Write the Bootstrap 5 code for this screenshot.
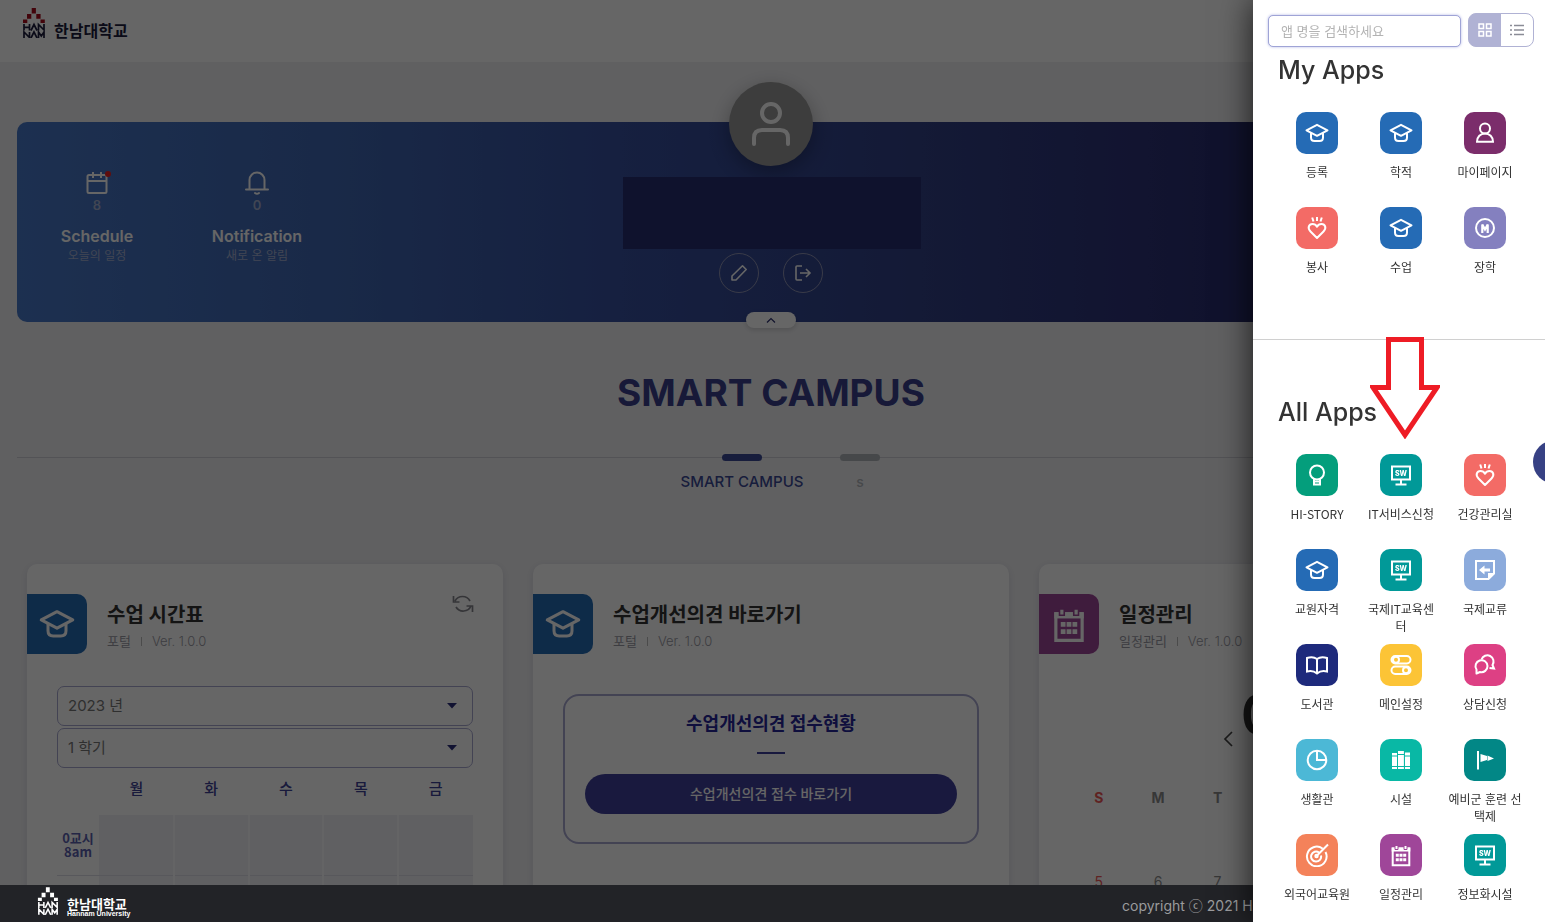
<!DOCTYPE html>
<html lang="ko">
<head>
<meta charset="utf-8">
<meta name="viewport" content="width=device-width, initial-scale=1">
<title>한남대학교 SMART CAMPUS</title>
<link href="https://cdn.jsdelivr.net/npm/bootstrap@5.3.0/dist/css/bootstrap.min.css" rel="stylesheet">
<style>
:root { --navy: #3a3f8c; --line: #a8a8d0; }
body { font-family: Inter, "Noto Sans CJK KR", sans-serif; background: #f0f0f3; overflow: hidden; }
svg { fill: none; stroke: currentColor; stroke-width: 2; display: block; flex: none; }
.kr { font-family: "Noto Sans CJK KR", sans-serif; }
.page { height: 100vh; overflow: hidden; padding-right: 3px; }
.topbar { height: 62px; background: #fff; padding: 8px 22px; margin-right: -3px; }
.brand-name { font-size: 16px; line-height: 20px; color: #1c1c3c; font-weight: 700; margin-top: 12px; }
.hero { margin: 60px 17px 0; height: 200px; border-radius: 10px; background: linear-gradient(90deg, #4878c8 0%, #3f66b2 22%, #3750a0 40%, #324187 60%, #2d3278 75%, #282d6e 82%, #24285f 100%); }
.stat { width: 160px; margin-top: 48px; }
.stat-icon { width: 26px; height: 26px; margin: 0 auto; }
.stat-count { font-size: 13px; line-height: 18px; font-weight: 600; color: #a3afd0; }
.stat-name { font-size: 16px; line-height: 20px; font-weight: 600; margin-top: 12px; }
.stat-note { font-size: 12px; line-height: 20px; color: #a3afd0; }
.stat-dot { width: 6px; height: 6px; background: #e22; top: 1px; right: -1px; }
.profile { top: -40px; }
.avatar { width: 84px; height: 84px; background: #989898; box-shadow: 0 6px 20px rgba(0,0,0,.3); }
.name-box { width: 298px; height: 72px; background: #272f70; margin: 11px 0 4px 2px; }
.round-btn { width: 40px; height: 40px; border: 1px solid #8f93b4; background: transparent; color: #fff; }
.fold-btn { width: 50px; height: 16px; border-radius: 8px; background: #fff; color: #2a2f70; bottom: -6px; box-shadow: 0 2px 5px rgba(0,0,0,.15); }
.page-title { font-size: 37px; line-height: 44px; margin: 49px 0 39px; color: var(--navy); font-weight: 700; }
.tabs-line { margin: 0 17px; }
.tabs-line::before { content: ""; position: absolute; left: 0; right: 0; top: 3px; height: 1px; background: #cfcfd6; }
.tab-item { width: 178px; padding: 0; font-size: 15px; line-height: 20px; font-weight: 500; color: #3b4a96; background: none; border: 0; z-index: 1; }
.tab-item::before { content: ""; display: block; width: 40px; height: 7px; border-radius: 4px; background: currentColor; margin: 0 auto 11px; }
.tab-item.off { width: 58px; color: #b0b5ba; font-size: 14px; }
.board { padding: 0 27px; margin-top: 72px; }
.board .row { --bs-gutter-x: 30px; }
.widget { border: 0; border-radius: 10px; box-shadow: 0 2px 8px rgba(0,0,60,.1); height: 600px; padding-top: 30px; }
.widget-icon { width: 60px; height: 60px; border-radius: 0 10px 10px 0; color: #fff; }
.blue { background: #256bb5; } .plum { background: #7b2d6b; } .coral { background: #f36b66; } .lilac { background: #8480bf; }
.green { background: #049e7c; } .teal { background: #019998; } .sky { background: #8cabdc; } .navy { background: #1e2a7c; }
.yellow { background: #fcc436; } .pink { background: #dd4084; } .aqua { background: #4cb8d6; } .mint { background: #09b8a5; }
.deep { background: #028786; } .orange { background: #f4825a; } .violet { background: #9f4699; }
.widget-title { font-size: 20px; line-height: 28px; font-weight: 700; color: #333; margin: 7px 0 0; }
.widget-sub { font-size: 13px; line-height: 24px; color: #9999a3; gap: 10px; }
.widget-sub span:last-child { font-weight: 300; }
.widget-sub i { width: 1px; height: 9px; background: #bbb; }
.widget-body { padding: 0 30px; margin-top: 32px; }
.pick { height: 40px; border: 1px solid var(--line); border-radius: 7px; padding: 0 10px; font-size: 15px; color: #777; margin-bottom: 2px;
  background-image: url("data:image/svg+xml,%3csvg xmlns='http://www.w3.org/2000/svg' viewBox='0 0 10 6'%3e%3cpath fill='%232c2f7c' d='M0 0h10L5 5.5z'/%3e%3c/svg%3e"); background-size: 10px 6px; background-position: right 15px center; }
.timetable { table-layout: fixed; font-size: 13px; margin: 0; width: 100%; border-collapse: collapse; }
.timetable th { color: #3d4196; font-weight: 500; text-align: center; padding: 0; }
.timetable thead th { height: 45px; font-size: 15px; padding-bottom: 8px; }
.timetable tbody th { color: #5b5fae; font-weight: 700; line-height: 14px; }
.timetable .hours { width: 42px; }
.timetable tbody tr { height: 60px; border-bottom: 1px solid #dcdce6; }
.timetable td { background: #f0f1f5; border-right: 2px solid #fafafc; }
.timetable td:last-child { border-right: 0; }
.notice { border: 2px solid var(--line); border-radius: 16px; height: 150px; margin-top: 8px; padding: 12px 20px; }
.notice-body { display: flow-root; }
.notice h3 { font-size: 18px; line-height: 32px; font-weight: 700; color: #26269a; margin: 0; }
.notice hr { width: 28px; border: 0; height: 2px; background: #3d3f9c; opacity: 1; margin: 12px auto 20px; }
.notice-btn { height: 40px; background: #40409c; color: #fff; font-size: 14px; font-weight: 500; line-height: 24px; border: 0; }
.month { font-size: 56px; line-height: 58px; font-weight: 600; color: #333; }
.month-nav { color: #444; margin-bottom: 20px; }
.cal-days { grid-template-columns: repeat(7, 1fr); display: grid; text-align: center; font-size: 14px; line-height: 20px; color: #8a8a8a; }
.cal-days .sun { color: #e55; }
.footer-bar { height: 37px; background: #222327; z-index: 1041; padding: 2px 22px 0 37px; color: #fff; }
.footer-name { font-size: 13px; line-height: 13px; font-weight: 700; margin-top: 10px; }
.footer-name small { font-family: "Liberation Sans", sans-serif; font-size: 7px; line-height: 7px; display: block; }
.copy { font-size: 14px; color: #9b9b9d; width: 401px; line-height: 37px; }
.offcanvas-backdrop.show { opacity: .6; }
.drawer.offcanvas { width: 292px; border: 0; box-shadow: 0 0 32px rgba(0,0,0,.75); visibility: visible; overflow: hidden; transition: none; }
.drawer-head { padding: 13px 11px 0 15px; gap: 7px; }
.search, .search:focus { height: 32px; font-size: 13px; border: 1px solid #9fa4d6; border-radius: 5px; padding: 0 12px 2px; box-shadow: 0 0 3px #b5b9e6; margin-top: 2px; }
.search::placeholder { color: #b3b3b3; }
.view-btn { width: 34px; height: 34px; border: 1px solid #b0b2d4; color: #8a8c96; border-radius: 8px; padding: 0; }
.view-btn.on { background: #b0b2d4; color: #fff; width: 33px; }
.apps { padding: 8px 18px 0 22px; flex-shrink: 0; }
.apps + .apps { border-top: 1px solid #d0d0d0; padding-top: 57px; }
.apps h2 { font-size: 25px; line-height: 30px; font-weight: 500; color: #333; margin: 0 0 27px 3px; }
.apps-mine { height: 292px; }
.app-grid { display: grid; grid-template-columns: repeat(3, 1fr); grid-auto-rows: 95px; }
.app-item { font: 12px/17px "Noto Sans CJK KR", sans-serif; color: #333; text-decoration: none; }
.app-item span { width: 74px; word-break: break-all; text-align: center; }
.app-icon { width: 42px; height: 42px; border-radius: 10px; color: #fff; margin-bottom: 9px; }
.pointer { left: 117px; top: 337px; z-index: 2; }
.side-dot { width: 44px; height: 44px; background: #374184; right: -32px; top: 440px; z-index: 1060; border: 0; }
</style>
</head>
<body>
<svg width="0" height="0" class="position-absolute" aria-hidden="true">
  <symbol id="i-cap" viewBox="0 0 24 24"><path d="M12 3.800 22.500 9.300 12 14.800 1.500 9.300z" stroke-linejoin="round"/><path d="M6 12v4.500Q6 20 9.500 20h5Q18 20 18 16.500V12"/></symbol>
  <symbol id="i-me" viewBox="0 0 24 24"><circle cx="12" cy="7.500" r="5"/><path d="M4 20.800h16c0-5-3.500-8.300-8-8.300s-8 3.300-8 8.300z"/></symbol>
  <symbol id="i-heart" viewBox="0 0 24 24"><path d="M12 22 5.500 15.500C2 12 4 8 7.500 8q3 0 4.500 2.700Q13.500 8 16.500 8c3.500 0 5.500 4 2 7.500z" stroke-linejoin="round"/><path d="M7.200 1.500 8.500 5.500M12 1v4M16.800 1.500l-1.300 4"/></symbol>
  <symbol id="i-coin" viewBox="0 0 24 24"><circle cx="12" cy="12" r="9"/><path d="M9.300 17V8.500l2.700 5 2.700-5V17" stroke-width="2.200"/></symbol>
  <symbol id="i-bulb" viewBox="0 0 24 24"><circle cx="12" cy="9.500" r="7"/><path d="M9 15.500v6h6v-6M9 18.500h6"/></symbol>
  <symbol id="i-note" viewBox="0 0 24 24"><path d="M3 3h18v12.500L15.500 21H3z"/><path d="M21 15h-6v6zM6 12l5.500-4.500v3H17v3h-5.500v3z" fill="currentColor" stroke="none"/></symbol>
  <symbol id="i-book" viewBox="0 0 24 24"><path d="M2 5q6-2 10 1 4-3 10-1v13.500q-6-1.500-10 2-4-3.500-10-2zM12 6v14"/></symbol>
  <symbol id="i-toggle" viewBox="0 0 24 24"><rect x="2.500" y="3" width="19" height="7.500" rx="3.700"/><rect x="2.500" y="13.500" width="19" height="7.500" rx="3.700"/><circle cx="7" cy="6.700" r="3"/><circle cx="17" cy="17.300" r="3"/></symbol>
  <symbol id="i-talk" viewBox="0 0 24 24"><path d="M8.500 6.500A6.200 6.200 0 1 1 19.500 12l1.500 3.500-4.500-.5"/><path d="M3.500 20.500v-4a6 6 0 1 1 3.500 2.500z" stroke-linejoin="round"/></symbol>
  <symbol id="i-pie" viewBox="0 0 24 24"><circle cx="12" cy="12" r="9.300"/><path d="M12 3v9h9"/></symbol>
  <symbol id="i-shelf" viewBox="0 0 24 24"><path d="M3 5h5v16H3zM9 3h6v18H9zM15.800 4.500H21V21h-5.200z" fill="currentColor" stroke="none"/><path d="M3 8h5M9 6.500h6M16 8h5M3 18.500h18M8.500 3v18M15.400 3v18" stroke="#09b8a5" stroke-width="1"/></symbol>
  <symbol id="i-flag" viewBox="0 0 24 24"><path d="M5 3v18.500"/><path d="M7.500 6l6.500 2v4l-6.500 2zM14.500 7.500 21 10.500l-6.500 2.500z" fill="currentColor" stroke="none"/></symbol>
  <symbol id="i-target" viewBox="0 0 24 24"><path d="M17.500 5.500A9.800 9.800 0 1 0 20.500 9M14 9.500a5 5 0 1 0 2 3M11.500 13 23 1.500"/><circle cx="11.500" cy="13" r="1.200"/></symbol>
  <symbol id="i-cal" viewBox="0 0 24 24"><path d="M3.700 5.500h16.600v16.800H3.700z"/><path d="M2.700 4.500h18.600v4H2.700z" fill="currentColor" stroke="none"/><path d="M6 2.500h3v4H6zM15 2.500h3v4h-3z" fill="currentColor" stroke="#9f4699" stroke-width="1"/><path d="M6.800 10.800h3v3h-3zM10.500 10.800h3v3h-3zM14.200 10.800h3v3h-3zM6.800 15.300h3v3h-3zM10.500 15.300h3v3h-3zM14.200 15.300h3v3h-3z" fill="currentColor" stroke="none"/></symbol>
  <symbol id="i-emblem" viewBox="0 0 24 30"><path d="M9.700 0h4.200v5.500H9.700zM5 6h4.300v4.800H5zM14.300 6h4.300v4.800h-4.300zM1 11.500h4.300V15H1zM18.500 11.500h4.300V15h-4.300z" fill="var(--blocks)" stroke="none"/><path d="M2 16v6.500M7.500 16v6.500M2 19.300h5.500M9 22.500l3-6 3 6M16.500 22.500v-6l5.500 5.500v-6M2 30v-6l5.500 5.500V24M9 30l3-6 3 6M16.500 30v-6l2.800 4 2.700-4v6" stroke-width="1.700"/></symbol>
</svg>

<div class="page">
  <header class="topbar d-flex align-items-start gap-2">
    <svg width="24" height="30" style="--blocks:#a80c1c" color="#1c1c3c"><use href="#i-emblem"/></svg>
    <span class="brand-name kr">한남대학교</span>
  </header>

  <section class="hero position-relative d-flex text-white text-center">
    <div class="stat">
      <div class="stat-icon position-relative">
        <svg width="26" height="26" viewBox="0 0 26 26"><rect x="3.500" y="5" width="19" height="18" rx="1.500"/><path d="M3 11h20M9 2v6M17 2v6"/></svg>
        <span class="stat-dot rounded-circle position-absolute"></span>
      </div>
      <div class="stat-count">8</div><div class="stat-name">Schedule</div><div class="stat-note">오늘의 일정</div>
    </div>
    <div class="stat">
      <div class="stat-icon"><svg width="26" height="26" viewBox="0 0 26 26"><path d="M2 19.500h22M5.500 19.500V10a7.500 7.500 0 0 1 15 0v9.500M11 23q2 1.500 4 0" stroke-linecap="round"/></svg></div>
      <div class="stat-count">0</div><div class="stat-name">Notification</div><div class="stat-note">새로 온 알림</div>
    </div>
    <div class="profile position-absolute start-50 translate-middle-x d-flex flex-column align-items-center">
      <div class="avatar rounded-circle d-flex align-items-center justify-content-center">
        <svg width="40" height="46" viewBox="0 0 40 46" stroke-linecap="round"><g stroke-width="4"><circle cx="20" cy="12" r="9"/><path d="M3 43v-6q0-8 8-8h18q8 0 8 8v6"/></g></svg>
      </div>
      <div class="name-box"></div>
      <div class="d-flex gap-4">
        <button class="round-btn rounded-circle p-0 d-flex align-items-center justify-content-center" aria-label="프로필 수정"><svg width="18" height="18" viewBox="0 0 18 18"><path d="M2 16v-4L12.500 1.800l3.700 3.700L6 16z" stroke-linejoin="round" stroke-width="1.600"/></svg></button>
        <button class="round-btn rounded-circle p-0 d-flex align-items-center justify-content-center" aria-label="로그아웃"><svg width="18" height="18" viewBox="0 0 18 18"><path d="M8 2H3Q2 2 2 3v12q0 1 1 1h5M6 9h10M12 5l4 4-4 4" stroke-width="1.600"/></svg></button>
      </div>
    </div>
    <button class="fold-btn border-0 p-0 position-absolute start-50 translate-middle-x d-flex align-items-center justify-content-center" aria-label="접기"><svg width="10" height="6" viewBox="0 0 10 6"><path d="M1 5.500 5 1.500l4 4" stroke-width="1.200"/></svg></button>
  </section>

  <h1 class="page-title text-center">SMART CAMPUS</h1>
  <nav class="tabs-line position-relative d-flex justify-content-center">
    <button class="tab-item">SMART CAMPUS</button>
    <button class="tab-item off">s</button>
  </nav>

  <main class="board"><div class="row row-cols-3">
    <div class="col"><article class="card widget">
      <div class="d-flex">
        <div class="widget-icon blue d-flex align-items-center justify-content-center"><svg width="36" height="36"><use href="#i-cap"/></svg></div>
        <div class="ms-3 ps-1 flex-grow-1"><h2 class="widget-title">수업 시간표</h2><div class="widget-sub d-flex align-items-center"><span>포털</span><i></i><span>Ver. 1.0.0</span></div></div>
        <svg class="me-4" color="#85858c" width="32" height="20" viewBox="0 0 32 20"><path d="M8 7a8.500 8.500 0 0 1 15 0M24 12a8.500 8.500 0 0 1-15 1M6.500 2v6h6M25.500 18v-6h-6" stroke-width="1.700"/></svg>
      </div>
      <div class="widget-body">
        <select class="form-select pick" aria-label="년도"><option>2023 년</option></select>
        <select class="form-select pick" aria-label="학기"><option>1 학기</option></select>
        <table class="timetable kr">
          <colgroup><col class="hours"><col><col><col><col><col></colgroup>
          <thead><tr><th></th><th>월</th><th>화</th><th>수</th><th>목</th><th>금</th></tr></thead>
          <tbody><tr><th>0교시<br>8am</th><td></td><td></td><td></td><td></td><td></td></tr>
          <tr><th></th><td></td><td></td><td></td><td></td><td></td></tr></tbody>
        </table>
      </div>
    </article></div>
    <div class="col"><article class="card widget">
      <div class="d-flex">
        <div class="widget-icon blue d-flex align-items-center justify-content-center"><svg width="36" height="36"><use href="#i-cap"/></svg></div>
        <div class="ms-3 ps-1"><h2 class="widget-title">수업개선의견 바로가기</h2><div class="widget-sub d-flex align-items-center"><span>포털</span><i></i><span>Ver. 1.0.0</span></div></div>
      </div>
      <div class="widget-body notice-body"><div class="notice text-center">
        <h3>수업개선의견 접수현황</h3><hr>
        <button class="btn notice-btn rounded-pill w-100">수업개선의견 접수 바로가기</button>
      </div></div>
    </article></div>
    <div class="col"><article class="card widget">
      <div class="d-flex">
        <div class="widget-icon violet d-flex align-items-center justify-content-center"><svg width="38" height="38"><use href="#i-cal"/></svg></div>
        <div class="ms-3 ps-1"><h2 class="widget-title">일정관리</h2><div class="widget-sub d-flex align-items-center"><span>일정관리</span><i></i><span>Ver. 1.0.0</span></div></div>
      </div>
      <div class="widget-body">
        <div class="month-nav d-flex justify-content-center align-items-center text-center">
          <svg class="mt-4" width="10" height="16" viewBox="0 0 10 16"><path d="M9 1 2 8l7 7" stroke-width="1.700"/></svg>
          <div class="mx-2"><div class="month">03</div><div>2023</div></div>
          <svg class="mt-4" width="10" height="16" viewBox="0 0 10 16"><path d="m1 1 7 7-7 7" stroke-width="1.700"/></svg>
        </div>
        <div class="cal-days fw-bold mb-5 pb-3"><span class="sun">S</span><span>M</span><span>T</span></div>
        <div class="cal-days"><span class="sun">5</span><span>6</span><span>7</span></div>
      </div>
    </article></div>
  </div></main>
</div>

<div class="offcanvas-backdrop show"></div>

<footer class="footer-bar fixed-bottom d-flex justify-content-between">
  <div class="d-flex gap-1">
    <svg width="22" height="28" style="--blocks:#fff"><use href="#i-emblem"/></svg>
    <div class="footer-name kr ms-1">한남대학교<small>Hannam University</small></div>
  </div>
  <div class="copy text-nowrap">copyright ⓒ 2021 HANNAM UNIVERSITY</div>
</footer>

<aside class="drawer offcanvas offcanvas-end show" tabindex="-1" data-bs-backdrop="false" data-bs-scroll="true" aria-label="앱 목록">
  <div class="drawer-head d-flex">
    <input class="form-control search kr" type="search" placeholder="앱 명을 검색하세요" aria-label="앱 검색">
    <div class="btn-group flex-shrink-0" role="group">
      <button class="btn view-btn on d-flex align-items-center justify-content-center" aria-label="격자 보기"><svg width="14" height="14" viewBox="0 0 14 14"><path d="M1 1h4.500v4.500H1zM8.500 1H13v4.500H8.500zM1 8.500h4.500V13H1zM8.500 8.500H13V13H8.500z" stroke-width="1.500"/></svg></button>
      <button class="btn view-btn d-flex align-items-center justify-content-center" aria-label="목록 보기"><svg width="14" height="12" viewBox="0 0 14 12"><path d="M0 1.500h2M4 1.500h10M0 6h2M4 6h10M0 10.500h2M4 10.500h10" stroke-width="1.500"/></svg></button>
    </div>
  </div>
  <section class="apps apps-mine">
    <h2>My Apps</h2>
    <div class="app-grid">
      <a href="#" class="app-item d-flex flex-column align-items-center"><div class="app-icon blue d-flex align-items-center justify-content-center"><svg width="24" height="24"><use href="#i-cap"/></svg></div><span>등록</span></a>
      <a href="#" class="app-item d-flex flex-column align-items-center"><div class="app-icon blue d-flex align-items-center justify-content-center"><svg width="24" height="24"><use href="#i-cap"/></svg></div><span>학적</span></a>
      <a href="#" class="app-item d-flex flex-column align-items-center"><div class="app-icon plum d-flex align-items-center justify-content-center"><svg width="24" height="24"><use href="#i-me"/></svg></div><span>마이페이지</span></a>
      <a href="#" class="app-item d-flex flex-column align-items-center"><div class="app-icon coral d-flex align-items-center justify-content-center"><svg width="24" height="24"><use href="#i-heart"/></svg></div><span>봉사</span></a>
      <a href="#" class="app-item d-flex flex-column align-items-center"><div class="app-icon blue d-flex align-items-center justify-content-center"><svg width="24" height="24"><use href="#i-cap"/></svg></div><span>수업</span></a>
      <a href="#" class="app-item d-flex flex-column align-items-center"><div class="app-icon lilac d-flex align-items-center justify-content-center"><svg width="24" height="24"><use href="#i-coin"/></svg></div><span>장학</span></a>
    </div>
  </section>
  <section class="apps">
    <h2>All Apps</h2>
    <div class="app-grid">
      <a href="#" class="app-item d-flex flex-column align-items-center"><div class="app-icon green d-flex align-items-center justify-content-center"><svg width="24" height="24"><use href="#i-bulb"/></svg></div><span>HI-STORY</span></a>
      <a href="#" class="app-item d-flex flex-column align-items-center"><div class="app-icon teal d-flex align-items-center justify-content-center"><svg width="24" height="24" viewBox="0 0 24 24"><path d="M3 3.500h18v13H3zM12 16.500V21M6.500 21.500h11"/><text x="12" y="12.500" font-family="Inter" font-size="7" font-weight="800" text-anchor="middle" fill="currentColor" stroke="none">SW</text></svg></div><span>IT서비스신청</span></a>
      <a href="#" class="app-item d-flex flex-column align-items-center"><div class="app-icon coral d-flex align-items-center justify-content-center"><svg width="24" height="24"><use href="#i-heart"/></svg></div><span>건강관리실</span></a>
      <a href="#" class="app-item d-flex flex-column align-items-center"><div class="app-icon blue d-flex align-items-center justify-content-center"><svg width="24" height="24"><use href="#i-cap"/></svg></div><span>교원자격</span></a>
      <a href="#" class="app-item d-flex flex-column align-items-center"><div class="app-icon teal d-flex align-items-center justify-content-center"><svg width="24" height="24" viewBox="0 0 24 24"><path d="M3 3.500h18v13H3zM12 16.500V21M6.500 21.500h11"/><text x="12" y="12.500" font-family="Inter" font-size="7" font-weight="800" text-anchor="middle" fill="currentColor" stroke="none">SW</text></svg></div><span>국제IT교육센터</span></a>
      <a href="#" class="app-item d-flex flex-column align-items-center"><div class="app-icon sky d-flex align-items-center justify-content-center"><svg width="24" height="24"><use href="#i-note"/></svg></div><span>국제교류</span></a>
      <a href="#" class="app-item d-flex flex-column align-items-center"><div class="app-icon navy d-flex align-items-center justify-content-center"><svg width="24" height="24"><use href="#i-book"/></svg></div><span>도서관</span></a>
      <a href="#" class="app-item d-flex flex-column align-items-center"><div class="app-icon yellow d-flex align-items-center justify-content-center"><svg width="24" height="24"><use href="#i-toggle"/></svg></div><span>메인설정</span></a>
      <a href="#" class="app-item d-flex flex-column align-items-center"><div class="app-icon pink d-flex align-items-center justify-content-center"><svg width="24" height="24"><use href="#i-talk"/></svg></div><span>상담신청</span></a>
      <a href="#" class="app-item d-flex flex-column align-items-center"><div class="app-icon aqua d-flex align-items-center justify-content-center"><svg width="24" height="24"><use href="#i-pie"/></svg></div><span>생활관</span></a>
      <a href="#" class="app-item d-flex flex-column align-items-center"><div class="app-icon mint d-flex align-items-center justify-content-center"><svg width="24" height="24"><use href="#i-shelf"/></svg></div><span>시설</span></a>
      <a href="#" class="app-item d-flex flex-column align-items-center"><div class="app-icon deep d-flex align-items-center justify-content-center"><svg width="24" height="24"><use href="#i-flag"/></svg></div><span>예비군 훈련 선택제</span></a>
      <a href="#" class="app-item d-flex flex-column align-items-center"><div class="app-icon orange d-flex align-items-center justify-content-center"><svg width="24" height="24"><use href="#i-target"/></svg></div><span>외국어교육원</span></a>
      <a href="#" class="app-item d-flex flex-column align-items-center"><div class="app-icon violet d-flex align-items-center justify-content-center"><svg width="24" height="24"><use href="#i-cal"/></svg></div><span>일정관리</span></a>
      <a href="#" class="app-item d-flex flex-column align-items-center"><div class="app-icon teal d-flex align-items-center justify-content-center"><svg width="24" height="24" viewBox="0 0 24 24"><path d="M3 3.500h18v13H3zM12 16.500V21M6.500 21.500h11"/><text x="12" y="12.500" font-family="Inter" font-size="7" font-weight="800" text-anchor="middle" fill="currentColor" stroke="none">SW</text></svg></div><span>정보화시설</span></a>
    </div>
  </section>
  <svg class="pointer position-absolute" width="70" height="102" viewBox="0 0 70 102" aria-hidden="true"><path d="M18.500 2.500h33v48H67L35 98 3 50.500h15.500z" stroke="#ee1c25" stroke-width="5" fill="#fff"/></svg>
</aside>
<button class="side-dot rounded-circle position-fixed" aria-label="도움말"></button>
<script src="https://cdn.jsdelivr.net/npm/bootstrap@5.3.0/dist/js/bootstrap.bundle.min.js"></script>
</body>
</html>
